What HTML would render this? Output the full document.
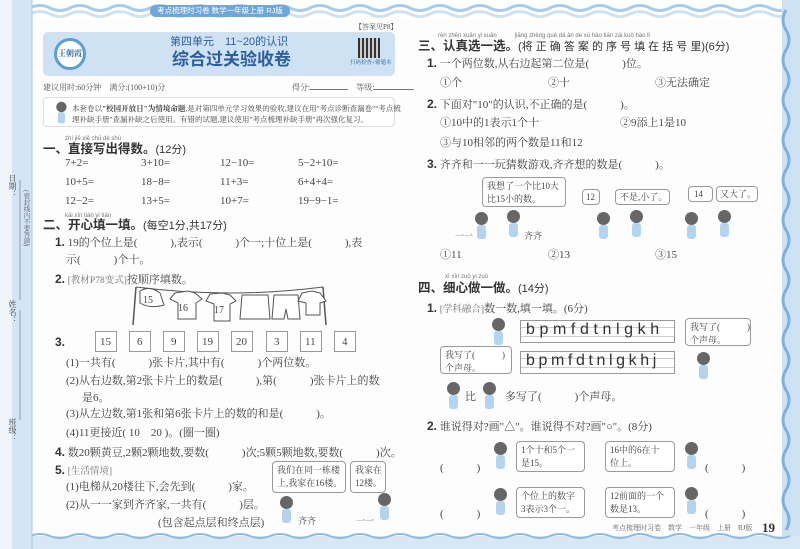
<!DOCTYPE html>
<html><head><meta charset="utf-8"><style>
*{margin:0;padding:0;box-sizing:border-box}
body{width:800px;height:549px;position:relative;overflow:hidden;background:#fdfdfd;font-family:"Liberation Serif","Noto Serif CJK SC",serif;color:#444;font-size:11px}
.a{position:absolute;white-space:nowrap;line-height:1}
.h{font-family:"Liberation Sans","Noto Sans CJK SC",sans-serif;font-weight:bold;font-size:12.5px;color:#333}
.py{font-family:"Liberation Sans",sans-serif;font-size:6px;color:#777}
.n{font-family:"Liberation Sans",sans-serif;font-weight:bold;font-size:12px;color:#333}
.bx{position:absolute;border:1px solid #999;background:#fff}
.bub{position:absolute;border:1px solid #999;border-radius:4px;background:#fff;font-size:9px;line-height:13px;padding:2px 4px;color:#444;white-space:nowrap;overflow:hidden}
.kid{position:absolute;width:20px;height:28px}
.kid:before{content:"";position:absolute;left:4px;top:0;width:13px;height:13px;border-radius:50%;background:#666}
.kid:after{content:"";position:absolute;left:6px;top:13px;width:9px;height:14px;background:#b3d3ee;border-radius:3px}
.tag{color:#777;font-size:9.5px}
</style></head><body>
<div class="a" style="left:0;top:0;width:800px;height:22px;background:#fff"></div>
<svg class="a" style="left:0;top:0" width="800" height="549">
<path d="M30 8 Q40 3 50 8 T70 8 T90 8 T110 8 T130 8 T150 8 T170 8 T190 8 T210 8 T230 8 T250 8 T270 8 T290 8 T310 8 T330 8 T350 8 T370 8 T390 8 T410 8 T430 8 T450 8 T470 8 T490 8 T510 8 T530 8 T550 8 T570 8 T590 8 T610 8 T630 8 T650 8 T670 8 T690 8 T710 8 T730 8 T750 8 T770 8 T790 8" stroke="#a9cbe8" stroke-width="3" fill="none"/>
<path d="M30 14 Q40 9 50 14 T70 14 T90 14 T110 14 T130 14 T150 14 T170 14 T190 14 T210 14 T230 14 T250 14 T270 14 T290 14 T310 14 T330 14 T350 14 T370 14 T390 14 T410 14 T430 14 T450 14 T470 14 T490 14 T510 14 T530 14 T550 14 T570 14 T590 14 T610 14 T630 14 T650 14 T670 14 T690 14 T710 14 T730 14 T750 14 T770 14 T790 14" stroke="#cfe2f3" stroke-width="3" fill="none"/>
<rect x="782" y="0" width="18" height="549" fill="#cfe2f3"/>
<path d="M786 10 Q780 20 786 30 T786 50 T786 70 T786 90 T786 110 T786 130 T786 150 T786 170 T786 190 T786 210 T786 230 T786 250 T786 270 T786 290 T786 310 T786 330 T786 350 T786 370 T786 390 T786 410 T786 430 T786 450 T786 470 T786 490 T786 510 T786 530" stroke="#7fb1e0" stroke-width="3" fill="none"/>
<rect x="0" y="536" width="800" height="13" fill="#d7e7f5"/>
<path d="M30 536 Q40 532 50 536 T70 536 T90 536 T110 536 T130 536 T150 536 T170 536 T190 536 T210 536 T230 536 T250 536 T270 536 T290 536 T310 536 T330 536 T350 536 T370 536 T390 536 T410 536 T430 536 T450 536 T470 536 T490 536 T510 536 T530 536 T550 536 T570 536 T590 536 T610 536 T630 536 T650 536 T670 536 T690 536 T710 536 T730 536 T750 536 T770 536 T790 536" stroke="#8fbbe3" stroke-width="2" fill="none"/>
<rect x="0" y="0" width="12" height="549" fill="#eef4fa"/>
<rect x="12" y="0" width="20" height="549" fill="#d4e6f5"/>
<line x1="32" y1="0" x2="32" y2="549" stroke="#aac8e4"/>
<line x1="20" y1="180" x2="20" y2="300" stroke="#99a"/>
<line x1="20" y1="310" x2="20" y2="420" stroke="#99a"/>
</svg>
<div class="a" style="left:150px;top:5px;width:140px;height:12px;background:#6ea6d8;border-radius:6px;color:#fff;font-size:7.5px;text-align:center;line-height:12px;font-family:'Liberation Sans','Noto Sans CJK SC',sans-serif">考点梳理时习卷 数学一年级上册 RJ版</div>
<div class="a" style="left:8px;top:174px;font-size:8px;writing-mode:vertical-rl;color:#444">日期：</div>
<div class="a" style="left:8px;top:300px;font-size:8px;writing-mode:vertical-rl;color:#444">姓名：</div>
<div class="a" style="left:8px;top:418px;font-size:8px;writing-mode:vertical-rl;color:#444">班级：</div>
<div class="a" style="left:22px;top:190px;font-size:6.5px;writing-mode:vertical-rl;color:#557">(密封线内不要答题)</div>

<div class="a" style="left:355px;top:24px;font-size:7px;color:#555">【答案见P8】</div>
<div class="a" style="left:43px;top:32px;width:352px;height:44px;background:#cfe2f3;border-radius:5px"></div>
<div class="a" style="left:54px;top:38px;width:32px;height:32px;border-radius:50%;background:#fff;border:3px solid #5d9dd6;font-size:8px;text-align:center;line-height:26px;color:#2c64a8;font-weight:bold">王朝霞</div>
<div class="a" style="left:170px;top:37px;font-size:11px;color:#2c5f9e;font-family:'Liberation Sans','Noto Sans CJK SC',sans-serif">第四单元　11~20的认识</div>
<div class="a" style="left:172px;top:51px;font-size:17px;font-weight:bold;color:#2c5f9e;font-family:'Liberation Sans','Noto Sans CJK SC',sans-serif">综合过关验收卷</div>
<div class="a" style="left:358px;top:38px;width:22px;height:20px;background:repeating-linear-gradient(90deg,#333 0 2px,#ccc 2px 4px),#333"></div>
<div class="a" style="left:350px;top:61px;font-size:5.5px;color:#2c5f9e">扫码检查+辅题本</div>
<div class="a" style="left:43px;top:84px;font-size:8px;color:#555">建议用时:60分钟　满分:(100+10)分</div>
<div class="a" style="left:292px;top:84px;font-size:8px;color:#555">得分:<span style="display:inline-block;width:38px;border-bottom:1px solid #777"></span>　等级:<span style="display:inline-block;width:40px;border-bottom:1px solid #777"></span></div>
<div class="a" style="left:43px;top:97px;width:352px;height:30px;border:1px solid #ddd;border-radius:4px;background:#fff"></div>
<div class="kid" style="left:51px;top:99px;transform:scale(.8)"></div>
<div class="a" style="left:72px;top:103px;font-size:7.5px;line-height:11px;color:#444">本套卷以<b>"校园开放日"为情境命题</b>,是对第四单元学习效果的验收,建议在用"考点诊断查漏卷""考点梳<br>理补缺手册"查漏补缺之后使用。有错的试题,建议使用"考点梳理补缺手册"再次强化复习。</div>

<div class="a py" style="left:65px;top:136px">zhí jiē xiě chū dé shù</div>
<div class="a h" style="left:43px;top:143px">一、直接写出得数。<span style="font-weight:normal;font-size:11px">(12分)</span></div>
<div class="a" style="left:65px;top:158px">7+2=</div><div class="a" style="left:141px;top:158px">3+10=</div><div class="a" style="left:220px;top:158px">12−10=</div><div class="a" style="left:298px;top:158px">5−2+10=</div>
<div class="a" style="left:65px;top:177px">10+5=</div><div class="a" style="left:141px;top:177px">18−8=</div><div class="a" style="left:220px;top:177px">11+3=</div><div class="a" style="left:298px;top:177px">6+4+4=</div>
<div class="a" style="left:65px;top:196px">12−2=</div><div class="a" style="left:141px;top:196px">13+5=</div><div class="a" style="left:220px;top:196px">10+7=</div><div class="a" style="left:298px;top:196px">19−9−1=</div>

<div class="a py" style="left:65px;top:213px">kāi xīn tián yi tián</div>
<div class="a h" style="left:43px;top:219px">二、开心填一填。<span style="font-weight:normal;font-size:11px">(每空1分,共17分)</span></div>
<div class="a" style="left:55px;top:236px"><span class="n">1.</span> 19的个位上是(　　　),表示(　　　)个一;十位上是(　　　),表</div>
<div class="a" style="left:66px;top:255px">示(　　　)个十。</div>
<div class="a" style="left:55px;top:273px"><span class="n">2.</span> <span class="tag">[教材P78变式]</span>按顺序填数。</div>
<svg class="a" style="left:130px;top:283px" width="200" height="45">
<line x1="3" y1="42" x2="6" y2="4" stroke="#555" stroke-width="1.5"/><line x1="196" y1="42" x2="193" y2="4" stroke="#555" stroke-width="1.5"/>
<path d="M6 4 Q100 16 193 4" stroke="#555" fill="none"/>
<g stroke="#555" fill="#fff" stroke-width="1">
<path d="M10 8 Q20 2 30 10 L34 22 Q20 26 10 20 Z"/>
<path d="M45 10 L58 8 L65 10 L72 16 L66 20 V36 H48 V20 L40 16 Z"/>
<path d="M80 11 L92 10 L100 12 L106 18 L100 21 V38 H84 V21 L76 18 Z"/>
<path d="M112 12 H138 L140 36 H110 Z"/>
<path d="M144 12 H168 L170 36 H158 L156 26 L154 36 H142 Z"/>
<path d="M172 10 L182 8 L190 10 L196 18 L190 20 V32 H176 V20 L168 18 Z"/>
</g>
<text x="13" y="20" font-size="10" fill="#444">15</text><text x="48" y="28" font-size="10" fill="#444">16</text><text x="84" y="30" font-size="10" fill="#444">17</text>
</svg>
<div class="a n" style="left:55px;top:336px">3.</div>
<div class="bx" style="left:95px;top:331px;width:22px;height:21px"></div><div class="a" style="left:100px;top:337px">15</div>
<div class="bx" style="left:129px;top:331px;width:22px;height:21px"></div><div class="a" style="left:137px;top:337px">6</div>
<div class="bx" style="left:163px;top:331px;width:22px;height:21px"></div><div class="a" style="left:171px;top:337px">9</div>
<div class="bx" style="left:197px;top:331px;width:22px;height:21px"></div><div class="a" style="left:202px;top:337px">19</div>
<div class="bx" style="left:231px;top:331px;width:22px;height:21px"></div><div class="a" style="left:236px;top:337px">20</div>
<div class="bx" style="left:266px;top:331px;width:22px;height:21px"></div><div class="a" style="left:274px;top:337px">3</div>
<div class="bx" style="left:300px;top:331px;width:22px;height:21px"></div><div class="a" style="left:305px;top:337px">11</div>
<div class="bx" style="left:334px;top:331px;width:22px;height:21px"></div><div class="a" style="left:342px;top:337px">4</div>
<div class="a" style="left:66px;top:358px">(1)一共有(　　　)张卡片,其中有(　　　)个两位数。</div>
<div class="a" style="left:66px;top:376px">(2)从右边数,第2张卡片上的数是(　　　),第(　　　)张卡片上的数</div>
<div class="a" style="left:82px;top:393px">是6。</div>
<div class="a" style="left:66px;top:409px">(3)从左边数,第1张和第6张卡片上的数的和是(　　　)。</div>
<div class="a" style="left:66px;top:428px">(4)11更接近( 10　20 )。(圈一圈)</div>
<div class="a" style="left:55px;top:446px"><span class="n">4.</span> 数20颗黄豆,2颗2颗地数,要数(　　　)次;5颗5颗地数,要数(　　　)次。</div>
<div class="a" style="left:55px;top:464px"><span class="n">5.</span> <span class="tag">[生活情境]</span></div>
<div class="a" style="left:66px;top:482px">(1)电梯从20楼往下,会先到(　　　)家。</div>
<div class="a" style="left:66px;top:500px">(2)从一一家到齐齐家,一共有(　　　)层。</div>
<div class="a" style="left:158px;top:518px">(包含起点层和终点层)</div>
<div class="bub" style="left:272px;top:461px;width:74px;height:32px">我们在同一栋楼<br>上,我家在16楼。</div>
<div class="bub" style="left:350px;top:461px;width:36px;height:32px">我家在<br>12楼。</div>
<div class="kid" style="left:276px;top:496px"></div><div class="a" style="left:298px;top:517px;font-size:9px">齐齐</div>
<div class="kid" style="left:374px;top:493px"></div><div class="a" style="left:356px;top:517px;font-size:9px">一一</div>

<div class="a py" style="left:438px;top:33px">rèn zhēn xuǎn yi xuǎn　　　jiāng zhèng què dá àn de xù hào tián zài kuò hào lǐ</div>
<div class="a h" style="left:418px;top:40px">三、认真选一选。<span style="font-weight:normal;font-size:11px">(将 正 确 答 案 的 序 号 填 在 括 号 里)(6分)</span></div>
<div class="a" style="left:427px;top:57px"><span class="n">1.</span> 一个两位数,从右边起第二位是(　　　)位。</div>
<div class="a" style="left:440px;top:78px">①个</div><div class="a" style="left:548px;top:78px">②十</div><div class="a" style="left:655px;top:78px">③无法确定</div>
<div class="a" style="left:427px;top:98px"><span class="n">2.</span> 下面对"10"的认识,不正确的是(　　　)。</div>
<div class="a" style="left:440px;top:118px">①10中的1表示1个十</div><div class="a" style="left:620px;top:118px">②9添上1是10</div>
<div class="a" style="left:440px;top:138px">③与10相邻的两个数是11和12</div>
<div class="a" style="left:427px;top:158px"><span class="n">3.</span> 齐齐和一一玩猜数游戏,齐齐想的数是(　　　)。</div>
<div class="bub" style="left:482px;top:177px;width:84px;height:30px">我想了一个比10大<br>比15小的数。</div>
<div class="bub" style="left:582px;top:189px;width:18px;height:16px;padding:0 3px;line-height:14px">12</div>
<div class="bub" style="left:615px;top:189px;width:55px;height:16px;padding:0 4px;line-height:14px">不是,小了。</div>
<div class="bub" style="left:688px;top:186px;width:25px;height:16px;padding:0 5px;line-height:14px">14</div>
<div class="bub" style="left:716px;top:186px;width:42px;height:16px;padding:0 3px;line-height:14px">又大了。</div>
<div class="kid" style="left:471px;top:212px"></div><div class="kid" style="left:503px;top:210px"></div>
<div class="a" style="left:455px;top:232px;font-size:9px">一一</div><div class="a" style="left:524px;top:232px;font-size:9px">齐齐</div>
<div class="kid" style="left:593px;top:212px"></div><div class="kid" style="left:626px;top:210px"></div>
<div class="kid" style="left:681px;top:212px"></div><div class="kid" style="left:714px;top:210px"></div>
<div class="a" style="left:440px;top:250px">①11</div><div class="a" style="left:548px;top:250px">②13</div><div class="a" style="left:655px;top:250px">③15</div>

<div class="a py" style="left:445px;top:274px">xì xīn zuò yi zuò</div>
<div class="a h" style="left:418px;top:282px">四、细心做一做。<span style="font-weight:normal;font-size:11px">(14分)</span></div>
<div class="a" style="left:427px;top:302px"><span class="n">1.</span> <span class="tag">[学科融合]</span>数一数,填一填。(6分)</div>
<div class="bx" style="left:520px;top:320px;width:155px;height:23px;background:linear-gradient(#fff 6px,#ccc 6px,#ccc 7px,#fff 7px,#fff 15px,#ccc 15px,#ccc 16px,#fff 16px)"></div>
<div class="a" style="left:526px;top:322px;font-family:'Liberation Sans',sans-serif;font-size:16px;letter-spacing:4.6px;color:#333">bpmfdtnlgkh</div>
<div class="bx" style="left:520px;top:351px;width:155px;height:23px;background:linear-gradient(#fff 6px,#ccc 6px,#ccc 7px,#fff 7px,#fff 15px,#ccc 15px,#ccc 16px,#fff 16px)"></div>
<div class="a" style="left:526px;top:353px;font-family:'Liberation Sans',sans-serif;font-size:16px;letter-spacing:3.6px;color:#333">bpmfdtnlgkhj</div>
<div class="kid" style="left:488px;top:318px"></div>
<div class="bub" style="left:440px;top:346px;width:72px;height:28px">我写了(　　　)<br>个声母。</div>
<div class="bub" style="left:685px;top:318px;width:66px;height:28px">我写了(　　　)<br>个声母。</div>
<div class="kid" style="left:693px;top:352px"></div>
<div class="kid" style="left:443px;top:382px"></div><div class="a" style="left:465px;top:392px">比</div>
<div class="kid" style="left:479px;top:382px"></div>
<div class="a" style="left:505px;top:392px">多写了(　　　)个声母。</div>
<div class="a" style="left:427px;top:420px"><span class="n">2.</span> 谁说得对?画"△"。谁说得不对?画"○"。(8分)</div>
<div class="a" style="left:440px;top:463px">(　　　)</div>
<div class="kid" style="left:490px;top:442px"></div>
<div class="bub" style="left:516px;top:441px;width:69px;height:31px">1个十和5个一<br>是15。</div>
<div class="bub" style="left:605px;top:441px;width:70px;height:31px">16中的6在十<br>位上。</div>
<div class="kid" style="left:681px;top:442px"></div>
<div class="a" style="left:705px;top:463px">(　　　)</div>
<div class="a" style="left:440px;top:509px">(　　　)</div>
<div class="kid" style="left:490px;top:488px"></div>
<div class="bub" style="left:516px;top:487px;width:69px;height:31px">个位上的数字<br>3表示3个一。</div>
<div class="bub" style="left:605px;top:487px;width:70px;height:31px">12前面的一个<br>数是13。</div>
<div class="kid" style="left:681px;top:487px"></div>
<div class="a" style="left:705px;top:509px">(　　　)</div>
<div class="a" style="left:612px;top:525px;font-size:7px;color:#666">考点梳理时习卷　数学　一年级　上册　RJ版</div>
<div class="a" style="left:762px;top:521px;font-size:13px;font-weight:bold;color:#333">19</div>
</body></html>
